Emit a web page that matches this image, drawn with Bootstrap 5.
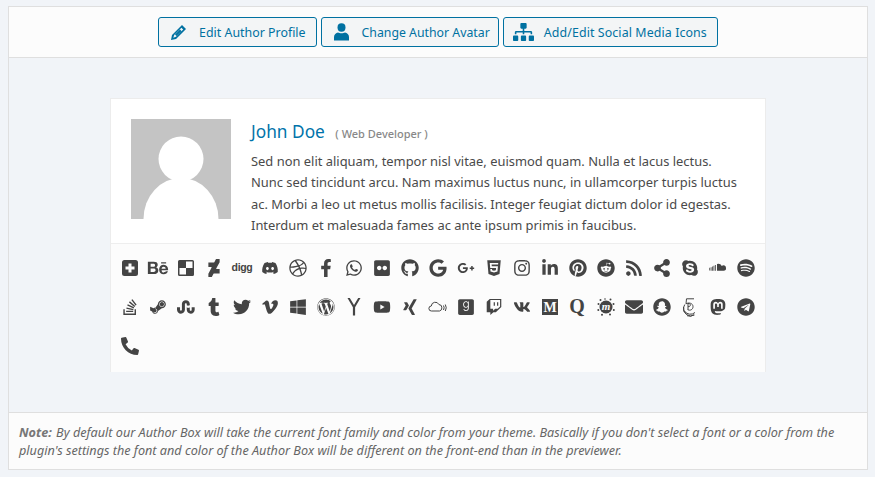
<!DOCTYPE html>
<html lang="en">
<head>
    <meta charset="UTF-8">
    <meta name="viewport" content="width=device-width, initial-scale=1.0">
    <title>Author Box Preview</title>
    <link href="https://cdn.jsdelivr.net/npm/bootstrap@5.3.3/dist/css/bootstrap.min.css" rel="stylesheet">
    <style>
        body {
            background: #f1f4f8;
            font-family: "Noto Sans", sans-serif;
            padding: 6px 7px 7px 8px;
            color: #4a4a4a;
        }
        .pv-frame {
            height: 464px;
            border: 1px solid #dfdfdf;
        }
        .pv-top {
            height: 51px;
            background: #fcfcfc;
            border-bottom: 1px solid #dfdfdf;
            padding-top: 10px;
        }
        .pv-btn {
            height: 30px;
            padding: 0 10px 0 9px;
            font-size: 12.4px;
            color: #0071a1;
            background: #f3f5f6;
            border: 1px solid #0071a1;
            border-radius: 3px;
        }
        .pv-btn svg { fill: #0071a1; }
        .pv-btn span { padding-top: 3px; }
        .pv-btn-mid { padding-right: 8px; font-size: 12.3px; }
        .pv-btn-wide { letter-spacing: .1px; }
        .pv-slot { width: 31px; }
        .pv-slot-in { margin-left: 3px; }
        .pv-stage { padding-top: 40px; }
        .pv-box {
            width: 656px;
            height: 274px;
            background: #fff;
            border: 1px solid #ececec;
        }
        .pv-head { height: 145px; padding: 20px 20px 0; border-bottom: 1px solid #eee; }
        .pv-pic { width: 100px; height: 100px; }
        .pv-name { font-size: 17.3px; line-height: 26px; color: #0073aa; }
        .pv-role { font-size: 11px; font-weight: 500; color: #888; margin-left: 6px; }
        .pv-bio { font-size: 12.92px; line-height: 21.3px; margin: 4px 0 0; }
        .pv-icons { padding: 4px 5px 0; background: #fcfcfc; height: 128px; }
        .pv-cell { width: 28px; height: 39px; }
        .pv-ic { width: 28px; height: 18px; fill: #444; overflow: visible; }
        .pv-cut { fill: #fcfcfc; }
        .pv-digg { font: 700 10.500px "Liberation Sans", sans-serif; letter-spacing: -.3px; }
        .pv-note {
            height: 57px;
            margin-top: 40px;
            background: #fcfcfc;
            border-top: 1px solid #dfdfdf;
            padding: 10px 10px 0;
            font-size: 12.65px;
            line-height: 18px;
            font-style: italic;
            color: #666;
        }
        .pv-note strong { color: #777; margin-right: 1px; }
    </style>
</head>
<body>
<div class="pv-frame">
    <div class="pv-top d-flex justify-content-center gap-1">
        <button class="btn pv-btn d-flex align-items-center">
            <span class="pv-slot d-flex p-0"><svg class="pv-slot-in" width="15" height="15" viewBox="0 0 15 15"><path fill-rule="evenodd" d="M11 0l4 4L5 14 0 15l1-5zM3.200 10l-.9 2.700 2.700-.9 7.200-7.200-1.800-1.800zM9 4.500l1.500 1.500-5 5L4 9.500z"/></svg></span>
            <span>Edit Author Profile</span>
        </button>
        <button class="btn pv-btn pv-btn-mid d-flex align-items-center">
            <span class="pv-slot d-flex p-0"><svg class="pv-slot-in" width="15" height="18" viewBox="0 0 15 18"><ellipse cx="7.500" cy="4.500" rx="4" ry="4.200"/><path d="M0 17.500v-3.500c0-2.500 2-4 4-4.500 1.500 1 5.500 1 7 0 2 .5 4 2 4 4.500v3.500z"/></svg></span>
            <span>Change Author Avatar</span>
        </button>
        <button class="btn pv-btn pv-btn-wide d-flex align-items-center">
            <span class="pv-slot d-flex p-0"><svg width="21" height="18" viewBox="0 0 640 512" preserveAspectRatio="none"><path d="M128 352H32c-17.670 0-32 14.330-32 32v96c0 17.670 14.330 32 32 32h96c17.670 0 32-14.330 32-32v-96c0-17.670-14.330-32-32-32zm-24-80h192v48h48v-48h192v48h48v-57.590c0-21.170-17.230-38.410-38.410-38.410H344v-64h40c17.670 0 32-14.330 32-32V32c0-17.670-14.330-32-32-32H256c-17.670 0-32 14.330-32 32v96c0 17.670 14.330 32 32 32h40v64H94.410C73.230 224 56 241.230 56 262.410V320h48v-48zm264 80h-96c-17.670 0-32 14.330-32 32v96c0 17.670 14.330 32 32 32h96c17.670 0 32-14.330 32-32v-96c0-17.670-14.330-32-32-32zm240 0h-96c-17.670 0-32 14.330-32 32v96c0 17.670 14.330 32 32 32h96c17.670 0 32-14.330 32-32v-96c0-17.670-14.330-32-32-32z"/></svg></span>
            <span>Add/Edit Social Media Icons</span>
        </button>
    </div>

    <div class="pv-stage">
        <div class="pv-box mx-auto">
            <div class="pv-head d-flex gap-3">
                <svg class="pv-pic flex-shrink-0 me-1" viewBox="0 0 100 100"><rect width="100" height="100" fill="#c4c4c4"/><circle cx="50" cy="40" r="22.500" fill="#fff"/><ellipse cx="50" cy="100" rx="37.500" ry="41" fill="#fff"/></svg>
                <div>
                    <div class="pv-name">John Doe <span class="pv-role">( Web Developer )</span></div>
                    <p class="pv-bio">Sed non elit aliquam, tempor nisl vitae, euismod quam. Nulla et lacus lectus. Nunc sed tincidunt arcu. Nam maximus luctus nunc, in ullamcorper turpis luctus ac. Morbi a leo ut metus mollis facilisis. Integer feugiat dictum dolor id egestas. Interdum et malesuada fames ac ante ipsum primis in faucibus.</p>
                </div>
            </div>
            <div class="pv-icons d-flex flex-wrap align-content-start" id="iconRow"></div>
        </div>
    </div>

    <div class="pv-note"><strong>Note:</strong> By default our Author Box will take the current font family and color from your theme. Basically if you don't select a font or a color from the plugin's settings the font and color of the Author Box will be different on the front-end than in the previewer.</div>
</div>

<script>
    // [viewBox, markup] for every social network, in display order
    const p = d => `<path d="${d}"/>`;
    const icons = [
        ["0 0 18 18", `<path fill-rule="evenodd" d="M3.500 1h11A2.500 2.500 0 0 1 17 3.500v11a2.500 2.500 0 0 1-2.500 2.500h-11A2.500 2.500 0 0 1 1 14.500v-11A2.500 2.500 0 0 1 3.500 1zM7.500 4.500v3h-3v3h3v3h3v-3h3v-3h-3v-3z"/>`],
        ["0 0 576 512", p("M232 237.200c31.800-15.200 48.400-38.200 48.400-74 0-70.600-52.600-87.800-113.300-87.800H0v354.400h171.800c64.400 0 124.900-30.900 124.900-102.900 0-44.500-21.100-77.400-64.700-89.700zM77.900 135.900H151c28.100 0 53.400 7.900 53.400 40.500 0 30.100-19.700 42.200-47.500 42.200h-79v-82.700zm83.300 233.700H77.900V272h84.900c34.300 0 56 14.300 56 50.600 0 35.800-25.900 47-57.600 47zm358.500-240.700H376V94h143.700v34.900zM576 305.200c0-75.900-44.400-139.200-124.900-139.200-78.200 0-131.300 58.800-131.300 135.800 0 79.900 50.300 134.700 131.300 134.700 61.300 0 101-27.600 120.100-86.300H509c-6.700 21.900-34.300 33.500-55.700 33.500-41.300 0-63-24.200-63-65.300h185.100c.3-4.200.6-8.700.6-13.200zM390.400 274c2.300-33.700 24.700-54.800 58.500-54.800 35.400 0 53.200 20.800 56.200 54.800H390.400z")],
        ["0 0 18 18", `<path fill-rule="evenodd" d="M2.500 1h13A1.500 1.500 0 0 1 17 2.500v13a1.500 1.500 0 0 1-1.500 1.500h-13A1.500 1.500 0 0 1 1 15.500v-13A1.500 1.500 0 0 1 2.500 1zM9 2.500V9H2.500v6.500H9V9h6.500V2.500z"/>`],
        ["0 0 320 512", p("M320 93.200l-98.200 179.100 7.400 9.500H320v127.700H159.100l-13.500 9.200-43.700 84c-.3 0-8.600 8.600-9.200 9.200H0v-93.200l93.200-179.400-7.400-9.200H0V102.500h156l13.500-9.200 43.700-84c.3 0 8.600-8.600 9.200-9.200H320v93.100z")],
        ["0 0 18 18", `<text class="pv-digg" x="9" y="12" text-anchor="middle">digg</text>`],
        ["0 -82 640 677", p("M524.531 69.836a1.500 1.500 0 0 0-.764-.7A485.065 485.065 0 0 0 404.081 32.030a1.816 1.816 0 0 0-1.923.91 337.461 337.461 0 0 0-14.900 30.600 447.848 447.848 0 0 0-134.426 0 309.541 309.541 0 0 0-15.135-30.600 1.890 1.890 0 0 0-1.924-.91A483.689 483.689 0 0 0 116.085 69.137a1.712 1.712 0 0 0-.788.676C39.068 183.651 18.186 294.690 28.430 404.354a2.016 2.016 0 0 0 .765 1.375A487.666 487.666 0 0 0 176.020 479.918a1.900 1.900 0 0 0 2.063-.676A348.200 348.200 0 0 0 208.120 430.400a1.860 1.860 0 0 0-1.019-2.588 321.173 321.173 0 0 1-45.868-21.853 1.885 1.885 0 0 1-.185-3.126c3.082-2.309 6.166-4.711 9.109-7.137a1.819 1.819 0 0 1 1.900-.256c96.229 43.917 200.410 43.917 295.500 0a1.812 1.812 0 0 1 1.924.233c2.944 2.426 6.027 4.851 9.132 7.160a1.884 1.884 0 0 1-.162 3.126 301.407 301.407 0 0 1-45.890 21.830 1.875 1.875 0 0 0-1 2.611 391.055 391.055 0 0 0 30.014 48.815 1.864 1.864 0 0 0 2.063.7A486.048 486.048 0 0 0 610.700 405.729a1.882 1.882 0 0 0 .765-1.352C623.729 277.594 590.933 167.465 524.531 69.836zM222.491 337.580c-28.972 0-52.844-26.587-52.844-59.239S193.056 219.100 222.491 219.100c29.665 0 53.306 26.820 52.843 59.239C275.334 310.993 251.924 337.580 222.491 337.580zm195.380 0c-28.971 0-52.843-26.587-52.843-59.239S388.437 219.100 417.871 219.100c29.667 0 53.307 26.820 52.844 59.239C470.715 310.993 447.538 337.580 417.871 337.580z")],
        ["0 0 512 512", p("M256 8C119.252 8 8 119.252 8 256s111.252 248 248 248 248-111.252 248-248S392.748 8 256 8zm163.970 114.366c29.503 36.046 47.369 81.957 47.835 131.955-6.984-1.477-77.018-15.682-147.502-6.818-5.752-14.041-11.181-26.393-18.617-41.614 78.321-31.977 113.818-77.482 118.284-83.523zM396.421 97.870c-3.810 5.427-35.697 48.286-111.021 76.519-34.712-63.776-73.185-116.168-79.040-124.008 67.176-16.193 137.966 1.270 190.061 47.489zm-230.480-33.250c5.585 7.659 43.438 60.116 78.537 122.509-99.087 26.313-186.360 25.934-195.834 25.809C62.380 147.205 106.678 92.573 165.941 64.620zM44.170 256.323c0-2.166.043-4.322.108-6.473 9.268.19 111.920 1.513 217.706-30.146 6.064 11.868 11.857 23.915 17.174 35.949-76.599 21.575-146.194 83.527-180.531 142.306C64.794 360.405 44.170 310.730 44.170 256.323zm81.807 167.113c22.127-45.233 82.178-103.622 167.579-132.756 29.740 77.283 42.039 142.053 45.189 160.638-68.112 29.013-150.015 21.053-212.768-27.882zm248.380 8.489c-2.171-12.886-13.446-74.897-41.152-151.033 66.380-10.626 124.700 6.768 131.947 9.055-9.442 58.941-43.273 109.844-90.795 141.978z")],
        ["0 0 320 512", p("M279.140 288l14.220-92.660h-88.910v-60.130c0-25.350 12.420-50.060 52.240-50.060h40.420V6.260S260.430 0 225.360 0c-73.220 0-121.080 44.380-121.080 124.720v70.620H22.890V288h81.390v224h100.170V288z")],
        ["0 0 448 512", p("M380.900 97.100C339 55.100 283.200 32 223.900 32c-122.400 0-222 99.600-222 222 0 39.100 10.200 77.300 29.600 111L0 480l117.700-30.900c32.400 17.700 68.900 27 106.100 27h.1c122.300 0 224.100-99.600 224.100-222 0-59.300-25.200-115-67.100-157zm-157 341.600c-33.200 0-65.700-8.900-94-25.700l-6.700-4-69.800 18.300L72 359.200l-4.400-7c-18.500-29.400-28.200-63.300-28.200-98.200 0-101.700 82.800-184.500 184.600-184.500 49.300 0 95.600 19.200 130.400 54.100 34.800 34.900 56.200 81.200 56.100 130.500 0 101.800-84.900 184.600-186.600 184.600zm101.200-138.200c-5.500-2.800-32.800-16.200-37.900-18-5.100-1.900-8.800-2.800-12.500 2.800-3.700 5.600-14.300 18-17.600 21.800-3.200 3.700-6.500 4.200-12 1.400-32.600-16.300-54-29.100-75.500-66-5.700-9.800 5.700-9.100 16.300-30.300 1.800-3.700.9-6.900-.5-9.700-1.400-2.800-12.500-30.100-17.100-41.200-4.500-10.800-9.100-9.300-12.500-9.500-3.200-.2-6.900-.2-10.600-.2-3.700 0-9.700 1.400-14.800 6.900-5.100 5.600-19.400 19-19.400 46.300 0 27.300 19.900 53.700 22.600 57.400 2.800 3.700 39.100 59.700 94.800 83.800 35.200 15.200 49 16.500 66.600 13.900 10.700-1.600 32.800-13.400 37.400-26.400 4.600-13 4.600-24.100 3.200-26.400-1.300-2.500-5-3.900-10.500-6.600z")],
        ["0 0 448 512", p("M400 32H48C21.500 32 0 53.500 0 80v352c0 26.500 21.500 48 48 48h352c26.500 0 48-21.500 48-48V80c0-26.500-21.500-48-48-48zM144.500 319c-35.100 0-63.500-28.400-63.500-63.500s28.400-63.500 63.500-63.500 63.500 28.400 63.500 63.500-28.400 63.500-63.500 63.500zm159 0c-35.100 0-63.500-28.400-63.500-63.500s28.400-63.500 63.500-63.500 63.500 28.400 63.500 63.500-28.400 63.500-63.500 63.500z")],
        ["0 0 496 512", p("M165.900 397.400c0 2-2.300 3.600-5.200 3.600-3.300 0-5.600-1.600-5.600-3.600 0-2 2.300-3.600 5.200-3.600 3-.3 5.600 1.300 5.600 3.600zm-31.100-4.500c-.7 2 1.300 4.300 4.300 4.900 2.600 1 5.600 0 6.200-2s-1.300-4.300-4.300-5.200c-2.600-.7-5.500.3-6.200 2.300zm44.200-1.700c-2.900.7-4.900 2.600-4.600 4.900.3 2 2.900 3.300 5.900 2.600 2.900-.7 4.900-2.600 4.600-4.600-.3-1.900-3-3.200-5.900-2.900zM244.800 8C106.100 8 0 113.300 0 252c0 110.900 69.800 205.800 169.500 239.200 12.800 2.300 17.300-5.600 17.300-12.100 0-6.200-.3-40.400-.3-61.400 0 0-70 15-84.700-29.800 0 0-11.400-29.100-27.800-36.600 0 0-22.900-15.700 1.600-15.400 0 0 24.900 2 38.600 25.800 21.900 38.600 58.600 27.500 72.900 20.900 2.300-16 8.800-27.100 16-33.700-55.900-6.200-112.300-14.300-112.300-110.500 0-27.500 7.600-41.300 23.600-58.900-2.600-6.500-11.100-33.300 2.600-67.900 20.900-6.500 69 27 69 27 20-5.600 41.500-8.500 62.800-8.500s42.800 2.900 62.800 8.500c0 0 48.100-33.600 69-27 13.700 34.700 5.200 61.400 2.600 67.900 16 17.700 25.800 31.500 25.800 58.900 0 96.500-58.900 104.200-114.800 110.500 9.200 7.900 17 22.900 17 46.400 0 33.700-.3 75.400-.3 83.600 0 6.500 4.600 14.400 17.300 12.100C428.200 457.800 496 362.900 496 252 496 113.300 383.500 8 244.800 8z")],
        ["0 0 488 512", p("M488 261.800C488 403.300 391.100 504 248 504 110.800 504 0 393.200 0 256S110.800 8 248 8c66.800 0 123 24.500 166.300 64.900l-67.500 64.900C258.500 52.600 94.300 116.600 94.300 256c0 86.500 69.100 156.600 153.700 156.600 98.200 0 135-70.400 140.800-106.900H248v-85.300h236.100c2.300 12.700 3.900 24.900 3.900 41.400z")],
        ["0 -82 640 677", p("M386.061 228.496c1.834 9.692 3.143 19.384 3.143 31.956C389.204 370.205 315.599 448 204.800 448c-106.084 0-192-85.915-192-192s85.916-192 192-192c51.864 0 95.083 18.859 128.611 50.292l-52.126 50.030c-14.145-13.621-39.028-29.599-76.485-29.599-65.484 0-118.920 54.221-118.920 121.277 0 67.056 53.436 121.277 118.920 121.277 75.961 0 104.513-54.745 108.965-82.773H204.800v-66.009h181.261zm185.406 6.437V179.200h-56.001v55.733h-55.733v56.001h55.733v55.733h56.001v-55.733H627.200v-56.001h-55.733z")],
        ["0 0 384 512", p("M0 32l34.900 395.800L191.500 480l157.600-52.200L384 32H0zm308.200 127.900H124.400l4.100 49.400h175.600l-13.600 148.400-97.900 27v.3h-1.100l-98.700-27.300-6-75.800h47.700L138 320l53.500 14.500 53.700-14.500 6-62.200H84.300L71.500 112.200h241.100l-4.400 47.700z")],
        ["0 0 448 512", p("M224.100 141c-63.600 0-114.900 51.300-114.900 114.900s51.300 114.900 114.900 114.900S339 319.500 339 255.900 287.700 141 224.100 141zm0 189.600c-41.100 0-74.700-33.500-74.700-74.700s33.500-74.700 74.700-74.700 74.700 33.500 74.700 74.700-33.600 74.700-74.700 74.700zm146.400-194.300c0 14.900-12 26.800-26.800 26.800-14.900 0-26.800-12-26.800-26.800s12-26.800 26.800-26.800 26.800 12 26.800 26.800zm76.100 27.200c-1.700-35.900-9.900-67.700-36.200-93.900-26.200-26.200-58-34.400-93.900-36.200-37-2.100-147.900-2.100-184.900 0-35.800 1.700-67.600 9.900-93.900 36.100s-34.400 58-36.200 93.900c-2.100 37-2.100 147.900 0 184.900 1.700 35.900 9.900 67.700 36.200 93.900s58 34.400 93.900 36.200c37 2.100 147.900 2.100 184.900 0 35.900-1.700 67.700-9.900 93.900-36.200 26.200-26.200 34.400-58 36.200-93.900 2.100-37 2.100-147.800 0-184.800zM398.800 388c-7.800 19.600-22.900 34.700-42.600 42.600-29.500 11.700-99.500 9-132.100 9s-102.700 2.600-132.100-9c-19.600-7.800-34.700-22.900-42.600-42.600-11.700-29.500-9-99.500-9-132.100s-2.600-102.700 9-132.100c7.800-19.600 22.900-34.700 42.600-42.600 29.500-11.700 99.500-9 132.100-9s102.700-2.600 132.100 9c19.600 7.800 34.700 22.900 42.600 42.600 11.700 29.500 9 99.500 9 132.100s2.700 102.700-9 132.100z")],
        ["0 0 448 512", p("M100.280 448H7.400V148.900h92.880zM53.790 108.100C24.090 108.100 0 83.500 0 53.800a53.790 53.790 0 0 1 107.580 0c0 29.700-24.100 54.300-53.790 54.300zM447.900 448h-92.680V302.400c0-34.700-.7-79.200-48.290-79.200-48.290 0-55.690 37.700-55.690 76.700V448h-92.780V148.900h89.080v40.800h1.300c12.400-23.500 42.690-48.300 87.880-48.300 94 0 111.280 61.900 111.280 142.300V448z")],
        ["0 0 496 512", p("M496 256c0 137-111 248-248 248-25.600 0-50.200-3.900-73.400-11.100 10.100-16.500 25.200-43.500 30.800-65 3-11.600 15.400-59 15.400-59 8.100 15.400 31.700 28.500 56.800 28.500 74.800 0 128.700-68.800 128.700-154.300 0-81.900-66.900-143.200-152.900-143.200-107 0-163.900 71.800-163.900 150.100 0 36.400 19.400 81.700 50.300 96.100 4.700 2.200 7.200 1.200 8.300-3.300.8-3.400 5-20.300 6.900-28.100.6-2.500.3-4.700-1.700-7.100-10.100-12.500-18.300-35.300-18.300-56.600 0-54.700 41.400-107.600 112-107.600 60.900 0 103.600 41.500 103.600 100.900 0 67.100-33.900 113.600-78 113.600-24.300 0-42.600-20.100-36.700-44.800 7-29.500 20.500-61.300 20.500-82.600 0-19-10.200-34.900-31.400-34.900-24.900 0-44.900 25.700-44.900 60.200 0 22 7.400 36.800 7.400 36.800s-24.500 103.800-29 123.200c-5 21.400-3 51.600-.9 71.200C65.400 450.900 0 361.100 0 256 0 119 111 8 248 8s248 111 248 248z")],
        ["0 0 512 512", p("M201.500 305.500c-13.800 0-24.900-11.100-24.900-24.600 0-13.800 11.100-24.900 24.900-24.900 13.600 0 24.600 11.100 24.600 24.900 0 13.600-11.100 24.600-24.600 24.600zM504 256c0 137-111 248-248 248S8 393 8 256 119 8 256 8s248 111 248 248zm-132.300-41.200c-9.400 0-17.700 3.900-23.800 10-22.400-15.500-52.600-25.500-86.100-26.600l17.400-78.300 55.400 12.500c0 13.600 11.100 24.600 24.600 24.600 13.800 0 24.900-11.300 24.900-24.900s-11.100-24.900-24.900-24.900c-9.700 0-18 5.800-22.100 13.800l-61.200-13.600c-3-.8-6.100 1.400-6.900 4.400l-19.100 86.400c-33.200 1.400-63.100 11.300-85.500 26.800-6.100-6.400-14.700-10.200-24.100-10.200-34.900 0-46.300 46.900-14.400 62.800-1.100 5-1.700 10.200-1.700 15.500 0 52.600 59.200 95.200 132 95.200 73.100 0 132.300-42.600 132.300-95.200 0-5.300-.6-10.800-1.900-15.800 31.300-16 19.800-62.500-14.900-62.500zM302.800 331c-18.200 18.200-76.100 17.900-93.600 0-2.200-2.200-6.100-2.200-8.300 0-2.500 2.500-2.500 6.400 0 8.600 22.800 22.800 87.300 22.800 110.200 0 2.500-2.200 2.500-6.100 0-8.600-2.200-2.200-6.100-2.200-8.300 0zm7.700-75c-13.600 0-24.600 11.100-24.600 24.900 0 13.600 11.100 24.600 24.600 24.600 13.800 0 24.900-11.100 24.900-24.600 0-13.800-11-24.900-24.900-24.900z")],
        ["0 0 448 512", p("M128.081 415.959c0 35.369-28.672 64.041-64.041 64.041S0 451.328 0 415.959s28.672-64.041 64.041-64.041 64.040 28.673 64.040 64.041zm175.660 47.250c-8.354-154.600-132.185-278.587-286.950-286.950C7.656 175.765 0 183.105 0 192.253v48.069c0 8.415 6.490 15.472 14.887 16.018 111.832 7.284 201.473 96.702 208.772 208.772.547 8.397 7.604 14.887 16.018 14.887h48.069c9.149.001 16.489-7.655 15.995-16.790zm144.249.288C439.596 229.677 251.465 40.445 16.503 32.010 7.473 31.686 0 38.981 0 48.016v48.068c0 8.625 6.835 15.645 15.453 15.999 191.179 7.839 344.627 161.316 352.465 352.465.353 8.618 7.373 15.453 15.999 15.453h48.068c9.034-.001 16.329-7.474 16.005-16.504z")],
        ["0 0 448 512", p("M352 320c-22.608 0-43.387 7.819-59.790 20.895l-102.486-64.054a96.551 96.551 0 0 0 0-41.683l102.486-64.054C308.613 184.181 329.392 192 352 192c53.019 0 96-42.981 96-96S405.019 0 352 0s-96 42.981-96 96c0 7.158.79 14.130 2.276 20.841L155.790 180.895C139.387 167.819 118.608 160 96 160c-53.019 0-96 42.981-96 96s42.981 96 96 96c22.608 0 43.387-7.819 59.790-20.895l102.486 64.054A96.301 96.301 0 0 0 256 416c0 53.019 42.981 96 96 96s96-42.981 96-96-42.981-96-96-96z")],
        ["0 0 448 512", p("M424.700 299.800c2.900-14 4.700-28.900 4.700-43.800 0-113.500-91.900-205.300-205.300-205.300-14.900 0-29.700 1.700-43.800 4.700C161.300 40.700 137.700 32 112 32 50.200 32 0 82.200 0 144c0 25.700 8.700 49.300 23.300 68.200-2.900 14-4.700 28.900-4.700 43.800 0 113.500 91.900 205.300 205.300 205.300 14.900 0 29.700-1.700 43.800-4.700 19 14.600 42.600 23.300 68.200 23.300 61.800 0 112-50.200 112-112 .1-25.600-8.600-49.200-23.200-68.100zm-194.600 91.500c-65.600 0-120.500-29.200-120.500-65 0-16 9-30.600 29.500-30.600 31.200 0 34.100 44.900 88.100 44.900 25.700 0 42.300-11.400 42.300-26.300 0-18.700-16-21.600-42-28-62.500-15.400-117.800-22-117.800-87.200 0-59.200 58.600-81.100 109.100-81.100 55.100 0 110.800 21.900 110.800 55.400 0 16.900-11.400 31.800-30.300 31.800-28.300 0-29.200-33.500-75-33.500-25.700 0-42 7-42 22.500 0 19.800 20.800 21.800 69.100 33 41.400 9.300 90.700 26.800 90.700 77.600 0 59.100-57.100 86.500-112 86.500z")],
        ["0 0 18 18", `<path d="M8 5a4 4 0 0 1 4.800 2 2.500 2.500 0 0 1 4.200 2 2.500 2.500 0 0 1-2.500 2.800H8z"/><path d="M.3 8.800h.8v2.700H.3zM1.700 8.200h.8v3.500h-.8zM3.100 7.400h.8v4.400h-.8zM4.500 6.800h.8v5h-.8zM5.900 6h.9v5.800h-.9z"/>`],
        ["0 0 496 512", p("M248 8C111.100 8 0 119.100 0 256s111.100 248 248 248 248-111.100 248-248S384.900 8 248 8zm100.700 364.900c-4.200 0-6.800-1.300-10.700-3.600-62.400-37.600-135-39.200-206.700-24.500-3.900 1-9 2.600-11.900 2.600-9.700 0-15.800-7.700-15.800-15.800 0-10.300 6.100-15.200 13.600-16.800 81.900-18.100 165.600-16.500 237 26.200 6.100 3.900 9.700 7.400 9.700 16.500s-7.100 15.400-15.200 15.400zm26.900-65.600c-5.200 0-8.700-2.300-12.300-4.200-62.500-37-155.700-51.900-238.600-29.400-4.800 1.300-7.400 2.600-11.900 2.600-10.700 0-19.400-8.700-19.400-19.400s5.200-17.800 15.500-20.700c27.800-7.800 56.200-13.600 97.800-13.600 64.900 0 127.600 16.100 177 45.500 8.100 4.800 11.300 11 11.300 19.700-.1 10.800-8.500 19.500-19.400 19.500zm31-76.200c-5.200 0-8.400-1.300-12.900-3.900-71.200-42.500-198.500-52.700-280.900-29.700-3.600 1-8.100 2.600-12.900 2.600-13.200 0-23.300-10.300-23.300-23.600 0-13.600 8.400-21.300 17.400-23.900 35.200-10.300 74.600-15.200 117.500-15.200 73 0 149.500 15.200 205.400 47.800 7.800 4.500 12.900 10.700 12.900 22.600 0 13.600-11 23.300-23.200 23.300z")],
        ["0 0 384 512", p("M290.700 311L95 269.700 86.800 309l195.700 41zm51-87L188.200 95.700l-25.500 30.800 153.500 128.300zm-31.200 39.700L129.200 179l-16.700 36.500L293.700 300zM262 32l-32 24 119.300 160.300 32-24zm20.500 328h-200v39.700h200zm39.700 80H42.700V320h-40v160h359.500V320h-40z")],
        ["0 0 448 512", p("M395.500 177.500c0 33.800-27.500 61-61 61-33.800 0-61-27.300-61-61s27.300-61 61-61c33.500 0 61 27.200 61 61zm52.500.2c0 63-51 113.800-113.700 113.800L225 371.300c-4 43-40.500 76.800-84.500 76.800-40.500 0-74.700-28.800-83-67L0 358V250.700L97.200 290c15.100-9.200 32.200-13.300 52-11.500l71-101.700c.5-62.300 51.500-112.800 114-112.800C397 64 448 115 448 177.700zM203 363c0-34.700-27.800-62.500-62.500-62.500-4.500 0-9 .5-13.500 1.500l26 10.500c25.500 10.200 38 39 27.700 64.500-10.200 25.500-39.200 38-64.700 27.500-10.200-4-20.500-8.300-30.700-12.200 10.500 19.700 31.200 33.200 55.200 33.200 34.700 0 62.500-27.800 62.500-62.500zm207.500-185.300c0-42-34.300-76.200-76.200-76.200-42.300 0-76.500 34.200-76.500 76.200 0 42.200 34.300 76.200 76.500 76.200 41.900.1 76.200-33.900 76.200-76.200z")],
        ["0 0 512 512", p("M502.900 266v69.700c0 62.100-50.300 112.400-112.400 112.400-61.800 0-112.400-49.800-112.400-111.300v-70.200l34.300 16 51.100-15.200V338c0 14.700 12 26.500 26.700 26.500S417 352.700 417 338v-72h85.900zm-224.700-58.200l34.300 16 51.100-15.200V173c0-60.500-51.100-109-112.100-109-60.800 0-112.100 48.200-112.100 108.200v162.400c0 14.900-12 26.700-26.700 26.700S86 349.500 86 334.600V266H0v69.700C0 397.700 50.300 448 112.400 448c61.600 0 112.400-49.500 112.400-110.800V176.900c0-14.700 12-26.700 26.700-26.700s26.700 12 26.700 26.700v30.900z")],
        ["0 0 320 512", p("M309.800 480.300c-13.600 14.500-50 31.700-97.400 31.700-120.800 0-147-88.800-147-140.600v-144H17.900c-5.500 0-10-4.500-10-10v-68c0-7.200 4.500-13.600 11.300-16 62-21.800 81.500-76 84.300-117.100.8-11 6.500-16.300 16.100-16.300h70.900c5.500 0 10 4.500 10 10v115.200h83c5.500 0 10 4.400 10 9.900v81.700c0 5.500-4.500 10-10 10h-83.400V360c0 34.200 23.700 53.600 68 35.800 4.800-1.900 9-3.200 12.700-2.200 3.500.9 5.800 3.400 7.400 7.900l22 64.300c1.800 5 3.300 10.600-.4 14.500z")],
        ["0 0 512 512", p("M459.370 151.716c.325 4.548.325 9.097.325 13.645 0 138.720-105.583 298.558-298.558 298.558-59.452 0-114.680-17.219-161.137-47.106 8.447.974 16.568 1.299 25.340 1.299 49.055 0 94.213-16.568 130.274-44.832-46.132-.975-84.792-31.188-98.112-72.772 6.498.974 12.995 1.624 19.818 1.624 9.421 0 18.843-1.300 27.614-3.573-48.081-9.747-84.143-51.980-84.143-102.985v-1.299c13.969 7.797 30.214 12.670 47.431 13.319-28.264-18.843-46.781-51.005-46.781-87.391 0-19.492 5.197-37.360 14.294-52.954 51.655 63.675 129.300 105.258 216.365 109.807-1.624-7.797-2.599-15.918-2.599-24.040 0-57.828 46.782-104.934 104.934-104.934 30.213 0 57.502 12.670 76.670 33.137 23.715-4.548 46.456-13.320 66.599-25.340-7.798 24.366-24.366 44.833-46.132 57.827 21.117-2.273 41.584-8.122 60.426-16.243-14.292 20.791-32.161 39.308-52.628 54.253z")],
        ["0 0 448 512", p("M447.800 153.600c-2 43.600-32.400 103.300-91.400 179.100-60.900 79.200-112.400 118.800-154.600 118.800-26.100 0-48.200-24.100-66.300-72.300C100.300 250 85.300 174.300 56.200 174.300c-3.400 0-15.100 7.100-35.200 21.100L0 168.200c51.600-45.300 100.900-95.700 131.800-98.500 34.900-3.400 56.300 20.500 64.400 71.500 28.700 181.500 41.400 208.900 93.600 126.700 18.700-29.600 28.800-52.100 30.200-67.600 4.800-45.900-35.800-42.800-63.300-31 22-72.100 64.100-107.100 126.200-105.100 45.800 1.200 67.500 31.100 64.900 89.400z")],
        ["0 0 448 512", p("M0 93.700l183.600-25.300v177.400H0V93.700zm0 324.600l183.600 25.300V268.400H0v149.900zm203.800 28L448 480V268.400H203.800v177.900zm0-380.600v180.100H448V32L203.800 65.700z")],
        ["0 0 512 512", p("M61.700 169.400l101.500 278C92.200 413 43.300 340.200 43.300 256c0-30.900 6.600-60.100 18.400-86.600zm337.900 75.900c0-26.300-9.400-44.500-17.500-58.700-10.800-17.500-20.900-32.400-20.900-49.900 0-19.600 14.800-37.800 35.700-37.800.9 0 1.800.1 2.800.2-37.900-34.700-88.300-55.900-143.700-55.900-74.300 0-139.700 38.100-177.800 95.900 5 .2 9.700.3 13.700.3 22.200 0 56.700-2.700 56.700-2.700 11.500-.7 12.800 16.200 1.400 17.500 0 0-11.500 1.300-24.300 2l77.500 230.400L249.800 247l-33.100-90.800c-11.500-.7-22.300-2-22.300-2-11.500-.7-10.100-18.200 1.300-17.500 0 0 35.100 2.700 56 2.700 22.200 0 56.700-2.700 56.700-2.700 11.500-.7 12.800 16.200 1.400 17.500 0 0-11.500 1.300-24.300 2l76.900 228.700 21.200-70.900c9-29.400 16-50.500 16-68.700zm-139.900 29.300l-63.800 185.500c19.100 5.600 39.200 8.700 60.100 8.700 24.800 0 48.500-4.300 70.600-12.100-.6-.9-1.100-1.900-1.500-2.900l-65.400-179.200zm183-120.700c.9 6.800 1.400 14 1.400 21.900 0 21.600-4 45.800-16.200 76.200l-65 187.900C426.200 403 468.700 334.500 468.700 256c0-37-9.400-71.800-26-102.100zM504 256c0 136.800-111.300 248-248 248C119.200 504 8 392.700 8 256 8 119.200 119.200 8 256 8c136.700 0 248 111.200 248 248zm-11.400 0c0-130.500-106.200-236.600-236.600-236.600C125.500 19.400 19.400 125.500 19.400 256S125.600 492.600 256 492.600c130.500 0 236.600-106.100 236.600-236.600z")],
        ["0 0 18 18", `<path d="M2.500 0h2.300L9 7l4.200-7h2.300L10.100 9.200V17.500H7.900V9.200z"/>`],
        ["0 -44 576 600", p("M549.655 124.083c-6.281-23.650-24.787-42.276-48.284-48.597C458.781 64 288 64 288 64S117.220 64 74.629 75.486c-23.497 6.322-42.003 24.947-48.284 48.597-11.412 42.867-11.412 132.305-11.412 132.305s0 89.438 11.412 132.305c6.281 23.650 24.787 41.500 48.284 47.821C117.220 448 288 448 288 448s170.780 0 213.371-11.486c23.497-6.321 42.003-24.171 48.284-47.821 11.412-42.867 11.412-132.305 11.412-132.305s0-89.438-11.412-132.305zm-317.510 213.508V175.185l142.739 81.205-142.739 81.201z")],
        ["0 0 384 512", p("M162.700 210c-1.800 3.300-25.200 44.400-70.100 123.500-4.900 8.300-10.800 12.500-17.700 12.500H9.800c-7.700 0-12.100-7.500-8.500-14.400l69-121.300c.2 0 .2-.1 0-.3l-43.900-75.600c-4.300-7.800.3-14.100 8.500-14.100H100c7.300 0 13.300 4.100 18 12.200l44.700 77.500zM382.600 46.100l-144 253v.3L330.200 466c3.900 7.100.2 14.100-8.500 14.100h-65.200c-7.600 0-13.600-4-18-12.200l-92.400-168.500c3.300-5.800 51.500-90.800 144.800-255.200 4.600-8.100 10.400-12.200 17.500-12.200h65.700c8 0 12.300 6.700 8.500 14.100z")],
        ["0 0 18 18", `<g fill="none" stroke="#444" stroke-width="1"><path d="M2.500 13a2.500 2.500 0 0 1-.2-5 4 4 0 0 1 7.600-1.500 3.200 3.200 0 0 1 3 3.300A3.200 3.200 0 0 1 10.500 13z"/><path d="M14.500 7.500a4.500 4.500 0 0 1 0 4.500M16.300 6.500a6.500 6.500 0 0 1 0 6.500"/></g>`],
        ["0 0 448 512", `<path fill-rule="evenodd" d="M48 32h352c26.500 0 48 21.500 48 48v352c0 26.500-21.500 48-48 48H48c-26.500 0-48-21.500-48-48V80c0-26.500 21.500-48 48-48z"/><path class="pv-cut" d="M224 90c-50 0-82 40-82 95s32 95 82 95c24 0 42-10 54-30v34c0 40-20 62-54 62-26 0-42-12-48-34h-26c6 36 34 58 74 58 52 0 80-32 80-86V96h-26v34c-12-26-30-40-54-40zm0 24c34 0 56 28 56 71s-22 71-56 71-56-28-56-71 22-71 56-71z"/>`],
        ["0 -30 512 572", p("M391.170 103.470H352.540v109.700h38.630zM285 103H246.370V212.750H285zM120.830 0 24.310 91.420V420.580H140.140V512l96.530-91.420h77.250L487.690 256V0zM449.070 237.750l-77.220 73.120H294.610l-67.600 64v-64H140.140V36.580H449.070z")],
        ["0 -44 576 600", p("M545 117.700c3.700-12.500 0-21.700-17.800-21.700h-58.900c-15 0-21.900 7.900-25.600 18.700 0 0-30.300 74.500-73.200 122.900-13.900 14-20.300 18.500-27.900 18.500-3.700 0-9.300-4.500-9.300-17V117.700c0-15-4.300-21.700-16.800-21.700h-92.600c-9.400 0-15 7-15 13.500 0 14.200 21.200 17.500 23.400 57.500v86.800c0 19-3.400 22.500-10.900 22.500-20 0-68.600-73.400-97.400-157.400-5.800-16.300-11.500-22.900-26.600-22.900H38.800c-16.800 0-20.200 7.900-20.200 16.700 0 15.600 20 93.100 93.100 195.500C160.400 378.100 229 416 291.400 416c37.500 0 42.100-8.400 42.100-22.900 0-66.800-3.400-73.100 15.400-73.100 8.700 0 23.700 4.400 58.700 38.100 40 40 46.600 57.900 69 57.900h58.900c16.800 0 25.300-8.400 20.400-25-11.200-34.900-86.900-106.700-90.300-111.500-8.700-11.200-6.200-16.200 0-26.200.1-.1 72-101.300 79.400-135.600z")],
        ["0 0 18 18", `<rect x="1" y="1" width="16" height="16"/><text x="9" y="14" text-anchor="middle" class="pv-cut" font-family="Liberation Serif" font-weight="700" font-size="14">M</text>`],
        ["0 0 18 18", `<text x="8" y="14.500" text-anchor="middle" font-family="Liberation Serif" font-weight="700" font-size="20">Q</text>`],
        ["0 0 18 18", `<circle cx="9" cy="9" r="6.500"/><g fill="#444"><circle cx="1.500" cy="6" r="1"/><circle cx="3.500" cy="2" r="1"/><circle cx="8" cy="1" r=".8"/><circle cx="13.500" cy="1.500" r="1"/><circle cx="16.500" cy="6" r="1"/><circle cx="16.800" cy="12" r="1"/><circle cx="13" cy="16.500" r="1"/><circle cx="5" cy="16.800" r="1"/><circle cx="1.300" cy="12" r="1"/></g><text x="9" y="12" text-anchor="middle" class="pv-cut" font-family="Liberation Serif" font-style="italic" font-weight="700" font-size="11">m</text>`],
        ["0 0 512 512", p("M502.300 190.800c3.900-3.100 9.700-.2 9.700 4.700V400c0 26.500-21.500 48-48 48H48c-26.500 0-48-21.500-48-48V195.600c0-5 5.700-7.800 9.700-4.700 22.400 17.400 52.100 39.500 154.100 113.600 21.100 15.400 56.700 47.800 92.200 47.600 35.700.3 72-32.800 92.300-47.600 102-74.100 131.600-96.300 154-113.700zM256 320c23.200.4 56.600-29.200 73.400-41.400 132.700-96.300 142.800-104.700 173.400-128.700 5.800-4.500 9.200-11.500 9.200-18.900v-19c0-26.500-21.500-48-48-48H48C21.500 64 0 85.500 0 112v19c0 7.400 3.400 14.300 9.200 18.900 30.600 23.900 40.700 32.400 173.400 128.700 16.800 12.200 50.200 41.800 73.400 41.400z")],
        ["0 0 512 512", p("M256 8C119 8 8 119 8 256s111 248 248 248 248-111 248-248S393 8 256 8zm169.500 338.900c-3.500 8.100-18.100 14-44.800 18.200-1.400 1.900-2.500 9.800-4.300 15.900-1.100 3.700-3.700 5.900-8.100 5.900h-.2c-6.200 0-12.800-2.900-25.800-2.900-17.600 0-23.700 4-37.400 13.700-14.500 10.300-28.400 19.100-49.200 18.200-21 1.600-38.600-11.200-48.500-18.200-13.800-9.700-19.800-13.700-37.400-13.700-12.500 0-20.400 3.100-25.800 3.100-5.400 0-7.500-3.300-8.300-6-1.800-6.100-2.900-14.100-4.300-16-13.800-2.100-44.800-7.500-45.500-21.400-.2-3.600 2.300-6.800 5.900-7.400 46.300-7.600 67.100-55.100 68-57.100 0-.1.1-.2.2-.3 2.500-5 3-9.200 1.600-12.500-3.400-7.900-17.900-10.700-24-13.200-15.800-6.200-18-13.400-17-18.300 1.600-8.500 14.400-13.800 21.900-10.300 5.900 2.800 11.200 4.200 15.700 4.200 3.300 0 5.500-.8 6.600-1.400-1.400-23.900-4.700-58 3.800-77.100C183.100 100 230.700 96 244.700 96c.6 0 6.100-.1 6.700-.1 34.700 0 68 17.800 84.300 54.300 8.500 19.100 5.200 53.100 3.800 77.100 1.100.6 2.900 1.300 5.700 1.400 4.300-.2 9.200-1.600 14.700-4.200 4-1.900 9.600-1.600 13.600 0 6.300 2.300 10.300 6.800 10.400 11.900.1 6.500-5.700 12.100-17.200 16.600-1.400.6-3.100 1.100-4.900 1.700-6.500 2.100-16.400 5.200-19 11.500-1.400 3.300-.8 7.500 1.600 12.500.1.100.1.200.2.300.9 2 21.700 49.500 68 57.100 4 1 7.100 5.500 5 10.400z")],
        ["0 0 18 18", `<g fill="none" stroke="#444" stroke-width="1"><path d="M5.500 .8h7.500M5.500 .8L5 5.800c2.800-1.600 7-.7 7 2.900 0 3-3 4.200-5.200 3"/><path d="M7 5v7M7 5.500c3-.6 3.300 3.500 0 3.200"/><path d="M3.800 6.500a7 7 0 0 0 2 9.800M2.500 9a7.500 7.500 0 0 0 11 8M3.500 13a7 7 0 0 0 10.500 1.500M6 17.700a7 7 0 0 0 7-1"/></g>`],
        ["0 0 448 512", p("M433 179.110c0-97.200-63.710-125.700-63.710-125.700-62.520-28.700-228.560-28.400-290.480 0 0 0-63.720 28.500-63.720 125.700 0 115.700-6.600 259.400 105.630 289.100 40.510 10.700 75.320 13 103.330 11.400 50.810-2.800 79.320-18.100 79.320-18.100l-1.700-36.900s-36.310 11.400-77.120 10.100c-40.410-1.400-83-4.400-89.630-54a102.540 102.540 0 0 1-.9-13.900c85.630 20.900 158.650 9.100 178.750 6.700 56.120-6.700 105-41.300 111.230-72.900 9.800-49.800 9-121.500 9-121.500zm-75.120 125.200h-46.630v-114.200c0-49.700-64-51.600-64 6.900v62.500h-46.330V197c0-58.500-64-56.600-64-6.900v114.200H90.190c0-122.100-5.200-147.900 18.410-175 25.900-28.900 79.820-30.800 103.830 6.100l11.600 19.500 11.600-19.500c24.110-37.100 78.120-34.800 103.830-6.100 23.710 27.200 18.400 53 18.400 175z")],
        ["0 0 496 512", p("M248 8C111 8 0 119 0 256s111 248 248 248 248-111 248-248S385 8 248 8zm121.800 169.900l-40.700 191.800c-3 13.600-11.100 16.900-22.400 10.500l-62-45.700-29.900 28.800c-3.300 3.300-6.100 6.100-12.500 6.100l4.400-63.100 114.900-103.800c5-4.400-1.100-6.900-7.700-2.500l-142 89.400-61.200-19.100c-13.300-4.200-13.600-13.300 2.800-19.700l239.100-92.200c11.100-4 20.800 2.700 17.200 19.500z")],
        ["0 0 512 512", p("M497.390 361.800l-112-48a24 24 0 0 0-28 6.900l-49.600 60.600A370.660 370.660 0 0 1 130.600 204.110l60.600-49.600a23.940 23.940 0 0 0 6.900-28l-48-112A24.160 24.160 0 0 0 122.600.61l-104 24A24 24 0 0 0 0 48c0 256.500 207.900 464 464 464a24 24 0 0 0 23.400-18.600l24-104a24.290 24.290 0 0 0-14.010-27.600z")]
    ];

    document.getElementById('iconRow').innerHTML = icons.map(([box, body]) =>
        `<div class="pv-cell d-flex align-items-center justify-content-center"><svg class="pv-ic" viewBox="${box}">${body}</svg></div>`
    ).join('');
</script>
<script src="https://cdn.jsdelivr.net/npm/bootstrap@5.3.3/dist/js/bootstrap.bundle.min.js"></script>
</body>
</html>
